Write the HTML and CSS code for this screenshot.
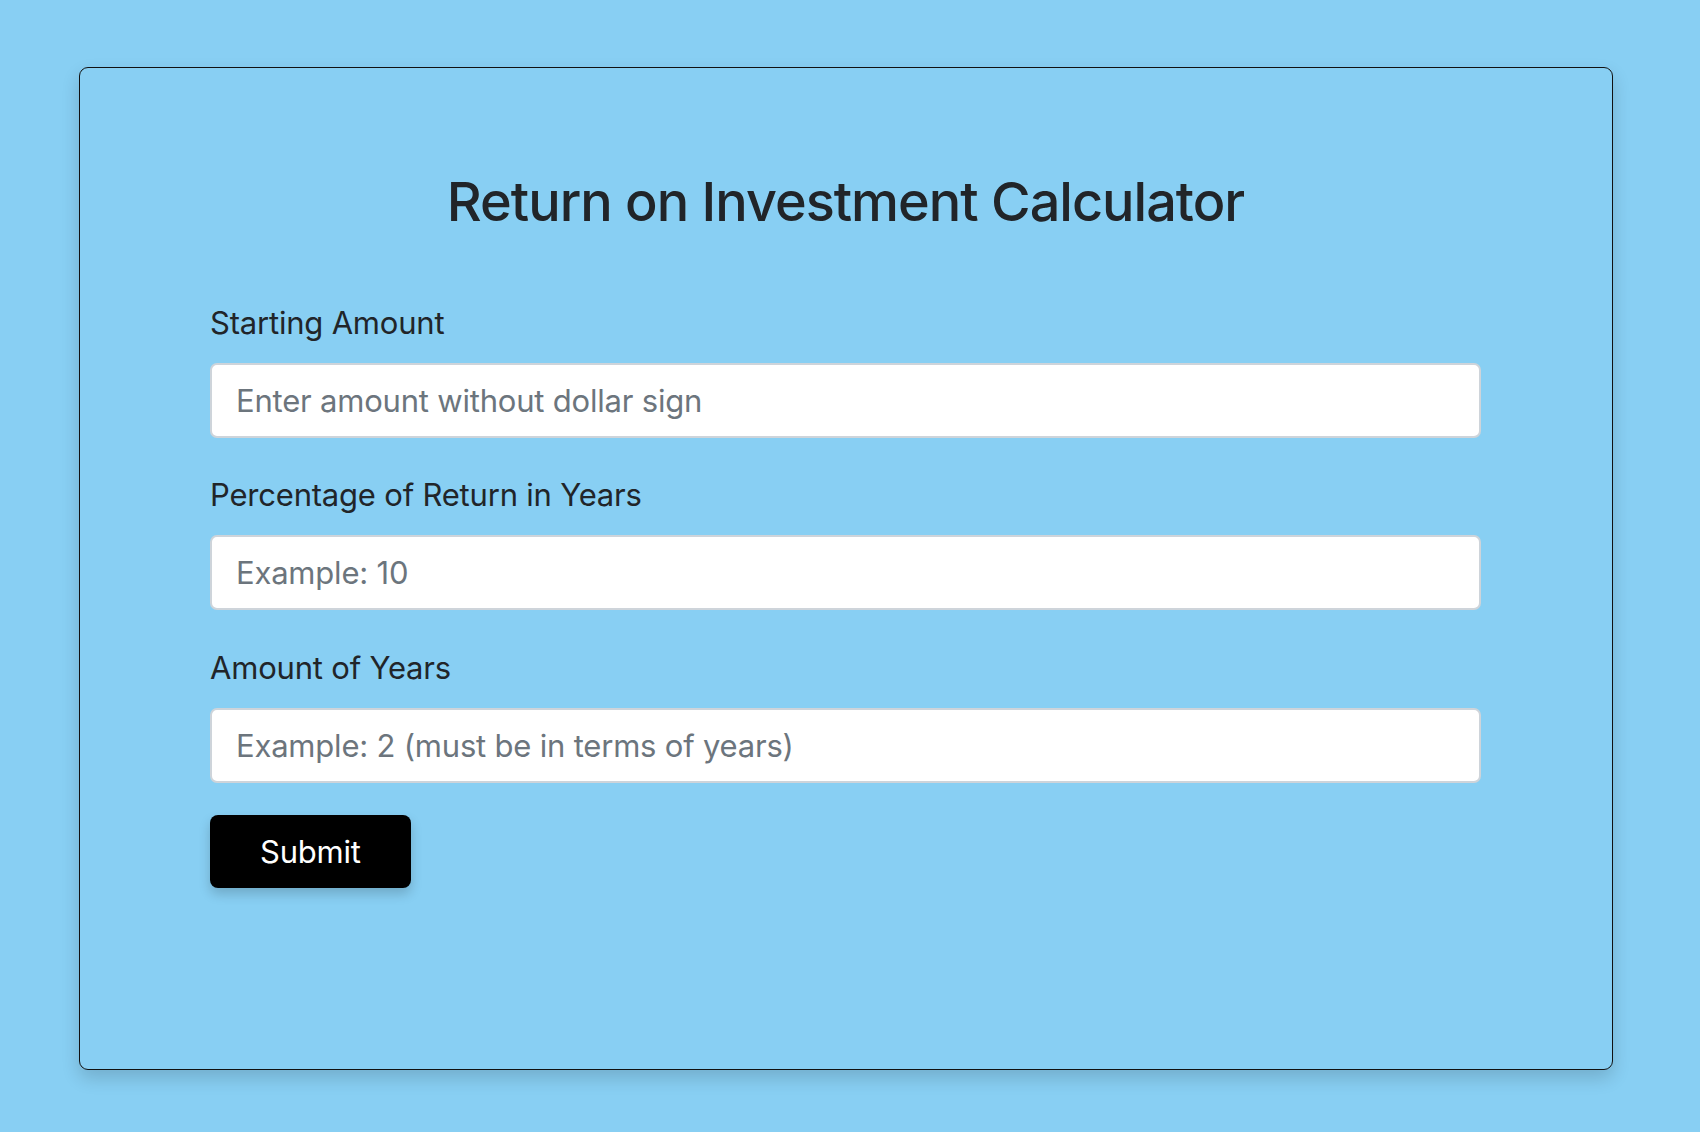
FILE: index.html
```html
<!DOCTYPE html>
<html lang="en">
<head>
<meta charset="utf-8">
<title>Return on Investment Calculator</title>
<link rel="stylesheet" href="styles.css">
</head>
<body>
<main class="card">
  <h1 class="title">Return on Investment Calculator</h1>
  <form class="form">
    <label class="label" for="amount">Starting Amount</label>
    <input class="field" id="amount" type="text" placeholder="Enter amount without dollar sign">
    <label class="label" for="percent">Percentage of Return in Years</label>
    <input class="field" id="percent" type="text" placeholder="Example: 10">
    <label class="label" for="years">Amount of Years</label>
    <input class="field" id="years" type="text" placeholder="Example: 2 (must be in terms of years)">
    <div class="actions">
      <button class="submit" type="button">Submit</button>
    </div>
  </form>
</main>
</body>
</html>
```
FILE: styles.css
```css
* { box-sizing: border-box; }
html, body {
  margin: 0;
  background: #88cff3;
}
body {
  padding: 67px 87px 0 79px;
  font-family: Inter, "Noto Sans", "Liberation Sans", sans-serif;
  color: #212529;
  min-height: 1132px;
}
.card {
  border: 1px solid #111;
  border-radius: 9px;
  box-shadow: 0 8px 18px rgba(0, 0, 0, 0.16);
  padding: 102px 131px 180.5px 130px;
  background: #88cff3;
}
.title {
  margin: 0 0 65px;
  text-align: center;
  font-size: 54px;
  font-weight: 500;
  line-height: 1.2;
  letter-spacing: -1px;
}
.form {
  display: flex;
  flex-direction: column;
}
.label {
  display: block;
  font-size: 31px;
  line-height: 1.5;
  margin-bottom: 16.5px;
  letter-spacing: -0.2px;
}
.field {
  display: block;
  width: 100%;
  height: 75px;
  padding: 0 24px;
  border: 2px solid #ced4da;
  border-radius: 7px;
  background: #fff;
  font-family: inherit;
  font-size: 31px;
  color: #212529;
  margin-bottom: 34.5px;
  letter-spacing: -0.2px;
}
.field::placeholder { color: #6c757d; }
.actions {
  display: flex;
  margin-top: -2px;
}
.submit {
  height: 73px;
  padding: 0 50px;
  border: 0;
  border-radius: 8px;
  background: #000;
  color: #fff;
  font-family: inherit;
  font-size: 31px;
  box-shadow: 0 6px 12px rgba(0, 0, 0, 0.18);
  letter-spacing: -0.2px;
}
```
